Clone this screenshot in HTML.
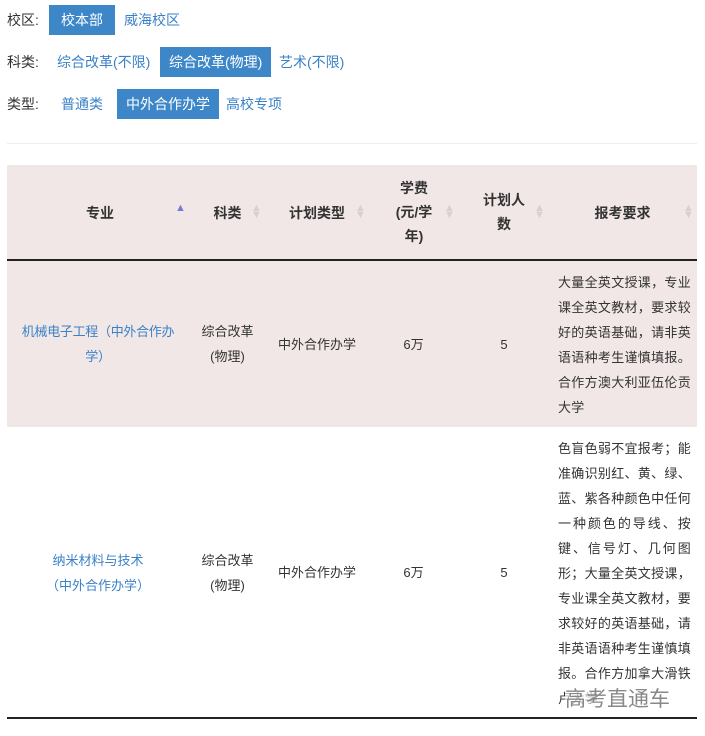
<!DOCTYPE html>
<html><head><meta charset="utf-8"><style>
body{margin:0;width:705px;height:736px;background:#fff;font-family:"Liberation Sans","Noto Sans CJK SC",sans-serif;position:relative;overflow:hidden;color:#333}
.a{position:absolute;white-space:nowrap}
.lbl{font-size:14px;color:#333}
.opt{font-size:14px;color:#3a82c8;height:30px;line-height:30px;padding:0 9px}
.on{background:#3d87c9;color:#fff}
.hd{position:absolute;top:165px;left:7px;width:690px;height:94px;background:#f1e7e6;border-bottom:2px solid #222}
.r1{position:absolute;top:261px;left:7px;width:690px;height:166px;background:#f1e7e6}
.c{position:absolute;text-align:center;font-size:13px;line-height:25px;color:#333}
.h{position:absolute;text-align:center;font-size:14px;font-weight:bold;line-height:24px;color:#333}
.req{position:absolute;left:558px;width:133px;font-size:13px;line-height:25px;color:#333;text-align:justify;letter-spacing:0.3px}
.s{position:absolute;font-size:11px;line-height:7px;color:#d8d0d0}
</style></head><body>
<div class="a lbl" style="left:7px;top:5px;line-height:30px">校区:</div>
<div class="a opt on" style="left:49px;top:5px;padding:0 12px">校本部</div>
<div class="a opt" style="left:115px;top:5px">威海校区</div>
<div class="a lbl" style="left:7px;top:47px;line-height:30px">科类:</div>
<div class="a opt" style="left:48px;top:47px">综合改革(不限)</div>
<div class="a opt on" style="left:160px;top:47px">综合改革(物理)</div>
<div class="a opt" style="left:270px;top:47px">艺术(不限)</div>
<div class="a lbl" style="left:7px;top:89px;line-height:30px">类型:</div>
<div class="a opt" style="left:52px;top:89px">普通类</div>
<div class="a opt on" style="left:117px;top:89px">中外合作办学</div>
<div class="a opt" style="left:217px;top:89px">高校专项</div>
<div class="a" style="left:7px;top:143px;width:690px;height:1px;background:#eee"></div>
<div class="hd"></div>
<div class="h" style="left:7px;width:186px;top:201px">专业</div>
<div class="a" style="left:175px;top:202px;font-size:11px;color:#7b7bd6">▲</div>
<div class="h" style="left:193px;width:69px;top:201px">科类</div>
<div class="h" style="left:262px;width:110px;top:201px">计划类型</div>
<div class="h" style="left:380px;width:68px;top:176px">学费<br>(元/学<br>年)</div>
<div class="h" style="left:462px;width:84px;top:188px">计划人<br>数</div>
<div class="h" style="left:550px;width:145px;top:201px">报考要求</div>
<div class="s" style="left:251px;top:205px">▲<br>▼</div>
<div class="s" style="left:355px;top:205px">▲<br>▼</div>
<div class="s" style="left:444px;top:205px">▲<br>▼</div>
<div class="s" style="left:534px;top:205px">▲<br>▼</div>
<div class="s" style="left:683px;top:205px">▲<br>▼</div>
<div class="r1"></div>
<div class="c" style="left:10px;width:176px;top:319px;color:#3a82c8;letter-spacing:-0.3px">机械电子工程（中外合作办<br>学）</div>
<div class="c" style="left:193px;width:69px;top:319px">综合改革(物理)</div>
<div class="c" style="left:262px;width:110px;top:332px">中外合作办学</div>
<div class="c" style="left:372px;width:83px;top:332px">6万</div>
<div class="c" style="left:462px;width:84px;top:332px">5</div>
<div class="req" style="top:270px">大量全英文授课，专业课全英文教材，要求较好的英语基础，请非英语语种考生谨慎填报。合作方澳大利亚伍伦贡大学</div>
<div class="c" style="left:40px;width:116px;top:548px;color:#3a82c8">纳米材料与技术（中外合作办学）</div>
<div class="c" style="left:193px;width:69px;top:548px">综合改革(物理)</div>
<div class="c" style="left:262px;width:110px;top:560px">中外合作办学</div>
<div class="c" style="left:372px;width:83px;top:560px">6万</div>
<div class="c" style="left:462px;width:84px;top:560px">5</div>
<div class="req" style="top:436px">色盲色弱不宜报考；能准确识别红、黄、绿、蓝、紫各种颜色中任何一种颜色的导线、按键、信号灯、几何图形；大量全英文授课，专业课全英文教材，要求较好的英语基础，请非英语语种考生谨慎填报。合作方加拿大滑铁卢大学</div>
<div class="a" style="left:565px;top:683px;font-size:21px;color:#888;background:rgba(255,255,255,.6)">高考直通车</div>
<div class="a" style="left:7px;top:717px;width:690px;height:2px;background:#222"></div>
</body></html>
